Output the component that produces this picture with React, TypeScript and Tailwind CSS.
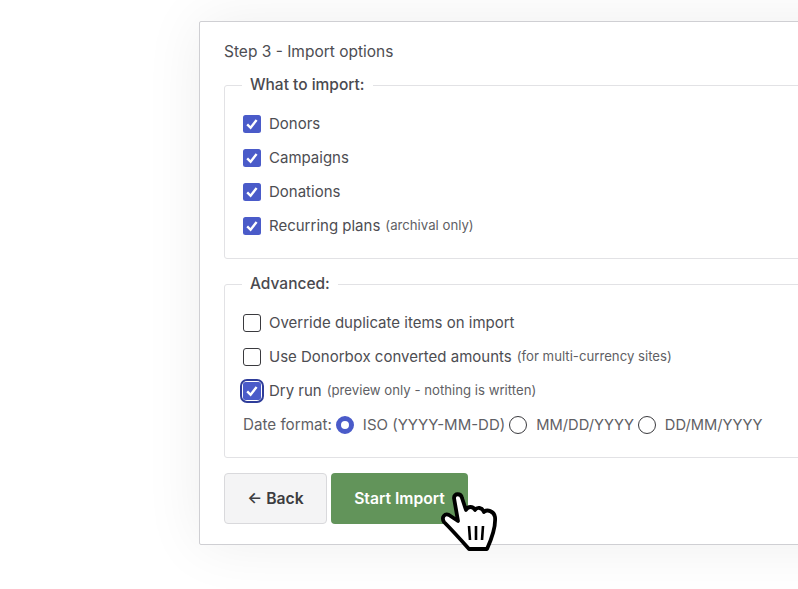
import React from "react";

const Check = () => (
  <svg viewBox="0 0 18 18" className="w-[18px] h-[18px] block">
    <rect x="0" y="0" width="18" height="18" rx="2.5" fill="#4a5bc9" />
    <path d="M4.2 9.4 L7.6 12.8 L13.6 5" fill="none" stroke="#fff" strokeWidth="2.4" />
  </svg>
);

const Label = ({ label, note }: { label: string; note?: string }) => (
  <>
    <span className="ml-[8px] text-[15px] text-[#4d4d52]">{label}</span>
    {note && <span className="ml-[5px] text-[13.2px] text-[#5f5f65]">{note}</span>}
  </>
);

const CheckRow = ({ label, note }: { label: string; note?: string }) => (
  <div className="flex items-center h-[34px]">
    <Check />
    <Label label={label} note={note} />
  </div>
);

const EmptyRow = ({ label, note }: { label: string; note?: string }) => (
  <div className="flex items-center h-[34px]">
    <span className="block w-[18px] h-[18px] rounded-[3px] border-[1.5px] border-[#3a3a3e] bg-white" />
    <Label label={label} note={note} />
  </div>
);

const Radio = ({ on }: { on?: boolean }) =>
  on ? (
    <span className="block w-[18px] h-[18px] rounded-full border-[5px] border-[#4a5bc9] bg-white shrink-0" />
  ) : (
    <span className="block w-[18px] h-[18px] rounded-full border-[1.5px] border-[#3a3a3e] bg-white shrink-0" />
  );

const Hand = () => (
  <svg viewBox="0 0 80 80" className="absolute left-[430px] top-[480px] w-[80px] h-[80px]">
    <path
      d="M24 18 C24 13 31 13 32 18 L36 30 C38 26 43 26 45 30 C47 27 52 27 54 32 C57 29 64 31 65 37 C66 47 62 58 57 69 L39 69 C31 60 22 50 14 42 C11 37 15 33 19 35 L28 41 Z"
      fill="#fff"
      stroke="#000"
      strokeWidth="3.8"
      strokeLinejoin="round"
    />
    <path d="M39 46 L40 60 M46 46 L46 60 M53 46 L52 60" fill="none" stroke="#000" strokeWidth="2.6" />
  </svg>
);

export default function App() {
  return (
    <div className="relative w-[798px] h-[589px] overflow-hidden bg-white pl-[199px] pt-[21px] font-['Inter',sans-serif]">
      <div className="w-[720px] h-[524px] bg-white border border-[#cfcfd3] rounded-[2px] shadow-[0_0_60px_rgba(0,0,0,0.07)] pl-[24px] pt-[20px]">
        <div className="text-[15.5px] leading-[20px] text-[#4d4d52]">Step 3 - Import options</div>

        <fieldset className="mt-[14px] h-[183px] border border-[#e2e2e5] rounded-[3px] pl-[18px]">
          <legend className="-ml-[1px] px-[8px] text-[15.5px] font-medium leading-[18px] text-[#4a4a4f]">
            What to import:
          </legend>
          <div className="pt-[13px] flex flex-col">
            <CheckRow label="Donors" />
            <CheckRow label="Campaigns" />
            <CheckRow label="Donations" />
            <CheckRow label="Recurring plans" note="(archival only)" />
          </div>
        </fieldset>

        <fieldset className="mt-[16px] h-[183px] border border-[#e2e2e5] rounded-[3px] pl-[18px]">
          <legend className="-ml-[1px] px-[8px] text-[15.5px] font-medium leading-[18px] text-[#4a4a4f]">
            Advanced:
          </legend>
          <div className="pt-[13px] flex flex-col">
            <EmptyRow label="Override duplicate items on import" />
            <EmptyRow label="Use Donorbox converted amounts" note="(for multi-currency sites)" />
            <div className="flex items-center h-[34px]">
              <span className="block rounded-[4px] outline-[2px] outline-[#2f3d9a] outline-offset-[1px] bg-white">
                <Check />
              </span>
              <Label label="Dry run" note="(preview only - nothing is written)" />
            </div>
            <div className="flex items-center h-[34px] text-[14.7px] text-[#5f5f65]">
              <span className="text-[15.2px]">Date format:</span>
              <span className="ml-[4px]"><Radio on /></span>
              <span className="ml-[9px] text-[15px]">ISO (YYYY-MM-DD)</span>
              <span className="ml-[4px]"><Radio /></span>
              <span className="ml-[9px]">MM/DD/YYYY</span>
              <span className="ml-[4px]"><Radio /></span>
              <span className="ml-[9px]">DD/MM/YYYY</span>
            </div>
          </div>
        </fieldset>

        <div className="mt-[15px] flex gap-[4px]">
          <button className="w-[103px] h-[51px] rounded-[4px] border border-[#d9d9dc] bg-[#f4f4f5] text-[15.7px] font-semibold text-[#3c3c40]">
            ← Back
          </button>
          <button className="w-[137px] h-[51px] rounded-[4px] bg-[#62945a] text-[15.7px] font-semibold text-white">
            Start Import
          </button>
        </div>
      </div>
      <Hand />
    </div>
  );
}
